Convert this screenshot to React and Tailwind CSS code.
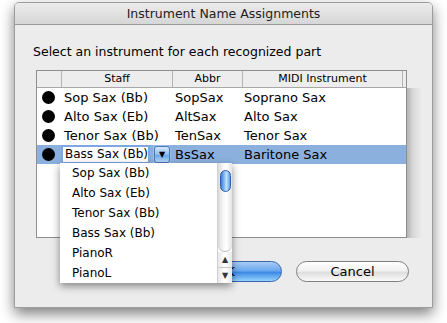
import React from 'react'

const rows = [
  { staff: 'Sop Sax (Bb)', abbr: 'SopSax', midi: 'Soprano Sax' },
  { staff: 'Alto Sax (Eb)', abbr: 'AltSax', midi: 'Alto Sax' },
  { staff: 'Tenor Sax (Bb)', abbr: 'TenSax', midi: 'Tenor Sax' },
  { staff: 'Bass Sax (Bb)', abbr: 'BsSax', midi: 'Baritone Sax', editing: true }
]

const choices = ['Sop Sax (Bb)', 'Alto Sax (Eb)', 'Tenor Sax (Bb)', 'Bass Sax (Bb)', 'PianoR', 'PianoL']

const Dot = () => <div className="w-[13px] h-[13px] rounded-full bg-black ml-[5px]" />

const App = () => {
  return (
    <div className="w-[447px] h-[323px] bg-white overflow-hidden pl-[14px] pt-[2px] font-['DejaVu_Sans',sans-serif] text-black">
      {/* Dialog window */}
      <div className="relative w-[419px] h-[306px] bg-[#ececec] border border-[#9d9d9d] rounded-t-[5px] shadow-[0_6px_14px_rgba(0,0,0,0.5)]">
        <div className="h-[22px] rounded-t-[4px] border-b border-[#9a9a9a] bg-[linear-gradient(to_bottom,#ececec,#d6d6d6)] flex items-center justify-center text-[12.5px] leading-[16px] text-[#222]">
          Instrument Name Assignments
        </div>

        <div className="mt-[19px] ml-[18px] text-[12.5px] leading-[16px]">
          Select an instrument for each recognized part
        </div>

        {/* Table */}
        <div className="mt-[10px] ml-[21px] flex">
          <div className="w-[371px] h-[168px] border border-[#8e8e8e] bg-white flex flex-col">
            <div className="h-[17px] flex border-b border-[#a8a8a8] bg-[#ededed] text-[11px] leading-[16px]">
              <div className="w-[25px] border-r border-[#b4b4b4]" />
              <div className="w-[111px] border-r border-[#b4b4b4] text-center">Staff</div>
              <div className="w-[70px] border-r border-[#b4b4b4] text-center">Abbr</div>
              <div className="w-[160px] border-r border-[#b4b4b4] text-center">MIDI Instrument</div>
              <div className="flex-1" />
            </div>
            {rows.map((r) => (
              <div
                key={r.abbr}
                className={`h-[19px] flex items-center text-[13px] leading-[19px] ${r.editing ? 'bg-[#8cb0de]' : ''}`}
              >
                <div className="w-[25px]"><Dot /></div>
                <div className="w-[111px] pl-[2px]">
                  {r.editing ? (
                    <div className="flex items-center -ml-[1px]">
                      <div className="w-[85px] h-[15px] bg-white ring-2 ring-[#7ea6e2] text-[12px] leading-[15px] pl-[2px]">
                        {r.staff}
                      </div>
                      <div className="ml-[6px] w-[16px] h-[17px] rounded-[3px] border border-[#4a78bd] ring-1 ring-[#9dbde9] bg-[linear-gradient(to_bottom,#d8e8fb,#8fbdf0_50%,#6aa6ec_55%,#b9dcfc)] flex items-center justify-center text-[8px] leading-none">
                        ▼
                      </div>
                    </div>
                  ) : (
                    r.staff
                  )}
                </div>
                <div className="w-[70px] pl-[2px]">{r.abbr}</div>
                <div className="flex-1 pl-[1px]">{r.midi}</div>
              </div>
            ))}
          </div>
          <div className="mt-[18px] w-[15px] h-[150px] bg-[linear-gradient(to_right,#b4b4b4,#d8d8d8_40%,#ececec)]" />
        </div>

        {/* Buttons */}
        <div className="mt-[23px] ml-[154px] flex gap-[14px] text-[13px]">
          <div className="w-[113px] h-[21px] rounded-full border border-[#3b67ad] bg-[linear-gradient(to_bottom,#a9ccf5,#6aa8ee_45%,#3f8ae6_55%,#94d2fc)] flex items-center justify-center leading-[16px]">
            OK
          </div>
          <div className="w-[113px] h-[21px] rounded-full border border-[#7f7f7f] bg-[linear-gradient(to_bottom,#ffffff,#f1f1f1_45%,#dedede_55%,#fafafa)] flex items-center justify-center leading-[16px]">
            Cancel
          </div>
        </div>

        {/* Open combo box list */}
        <div className="absolute left-[45px] top-[160px] w-[172px] h-[120px] bg-white flex shadow-[0_3px_8px_rgba(0,0,0,0.45)]">
          <div className="flex-1 text-[12px] leading-[20px] pl-[12px]">
            {choices.map((c) => (
              <div key={c} className="h-[20px]">{c}</div>
            ))}
          </div>
          <div className="w-[15px] flex flex-col border-l border-[#d0d0d0]">
            <div className="h-[89px] rounded-b-full border-b border-[#bdbdbd] bg-[linear-gradient(to_right,#d9d9d9,#f6f6f6_35%,#ffffff_60%,#e4e4e4)] pt-[7px]">
              <div className="mx-auto w-[11px] h-[22px] rounded-full border border-[#2f5fae] bg-[linear-gradient(to_right,#3c7cd6,#8cc0f5_40%,#c4e3fd_60%,#5b9de8)]" />
            </div>
            <div className="flex-1 flex flex-col bg-[linear-gradient(to_right,#e8e8e8,#ffffff_50%,#e8e8e8)]">
              <div className="flex-1 flex items-center justify-center text-[8px] leading-none text-[#333] border-b border-[#c8c8c8]">▲</div>
              <div className="flex-1 flex items-center justify-center text-[8px] leading-none text-[#333]">▼</div>
            </div>
          </div>
        </div>
      </div>
    </div>
  )
}

export default App
